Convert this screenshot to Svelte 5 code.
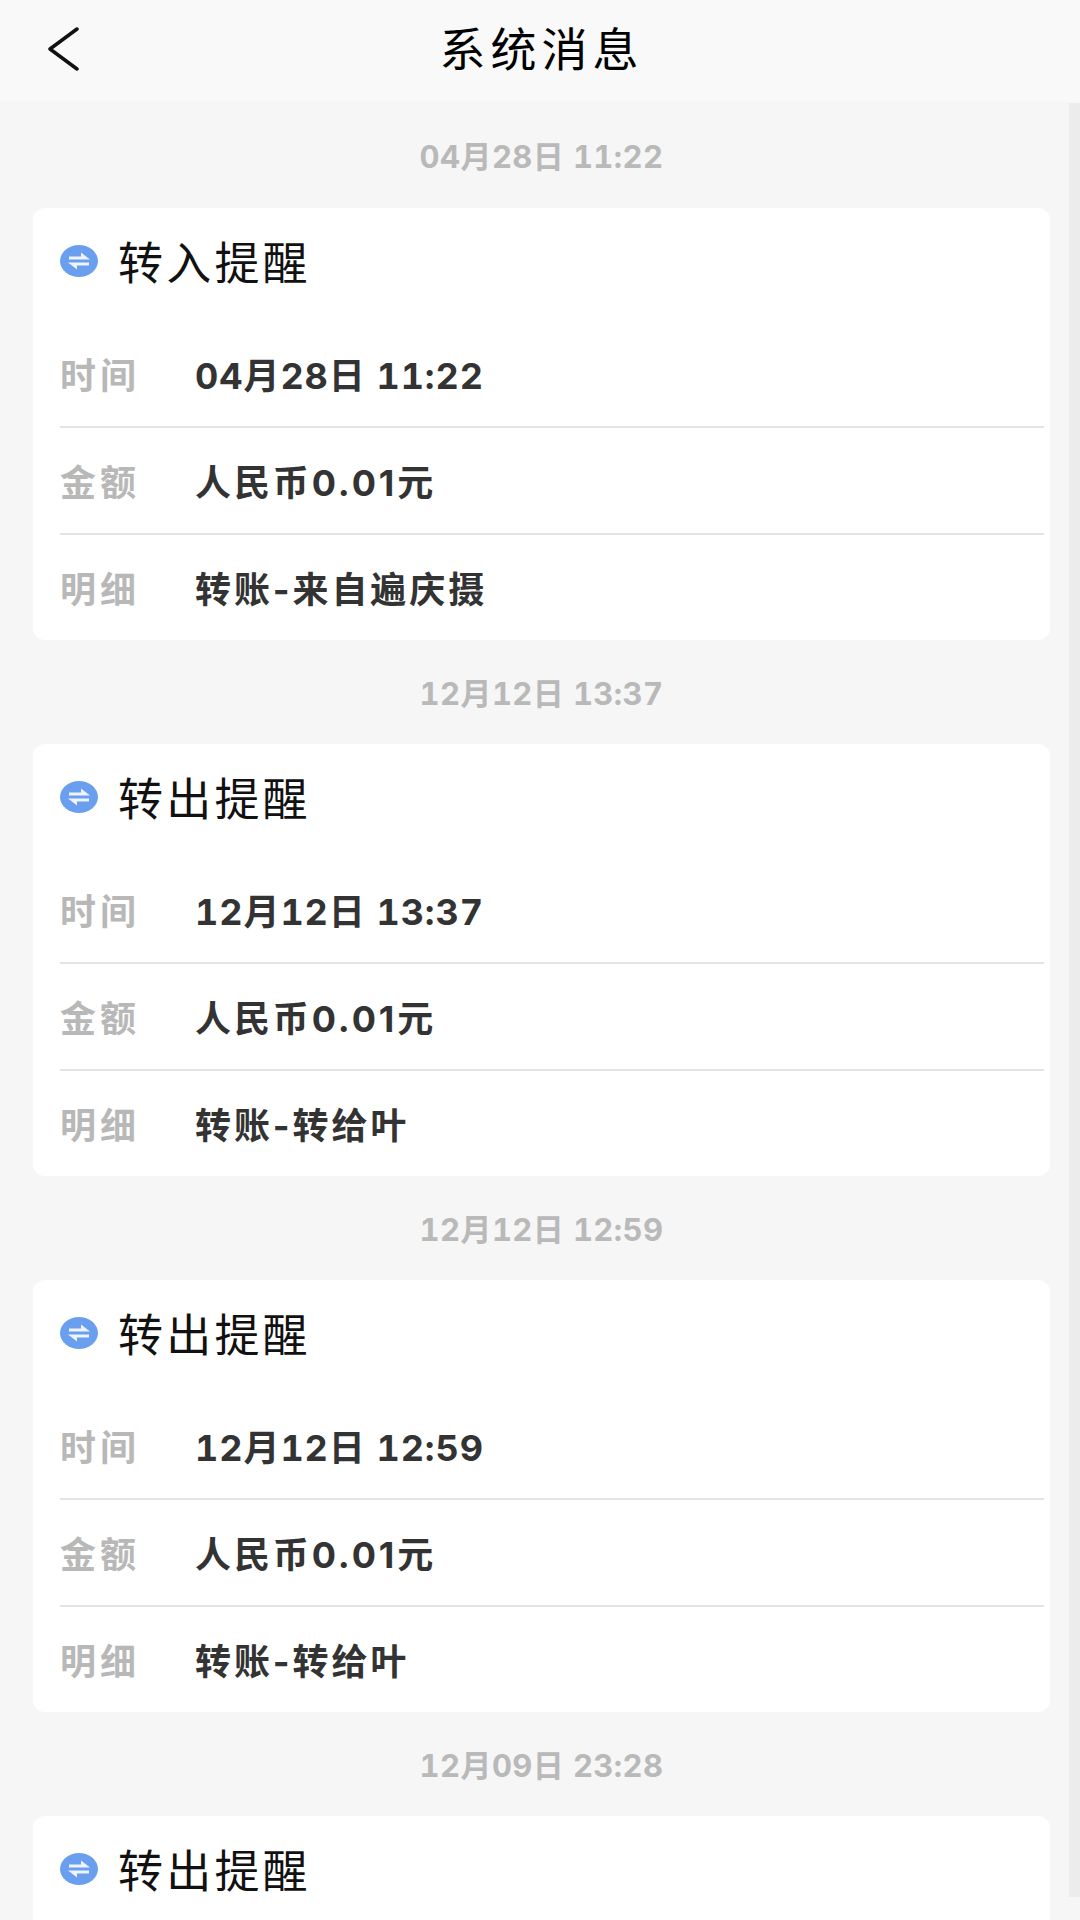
<script lang="ts">
	type Msg = { title: string; date: string; detail: string };

	const messages: Msg[] = [
		{ title: '转入提醒', date: '04月28日 11:22', detail: '转账-来自遍庆摄' },
		{ title: '转出提醒', date: '12月12日 13:37', detail: '转账-转给叶' },
		{ title: '转出提醒', date: '12月12日 12:59', detail: '转账-转给叶' },
		{ title: '转出提醒', date: '12月09日 23:28', detail: '转账-转给叶' },
	];
</script>

<div class="screen">
	<header class="nav">
		<button type="button" class="back" aria-label="返回">
			<svg width="32" height="44" viewBox="0 0 32 44" fill="none">
				<path d="M30 2 L3 22 L30 42" stroke="#111" stroke-width="3.5" stroke-linecap="round" stroke-linejoin="round" />
			</svg>
		</button>
		<h1>系统消息</h1>
	</header>

	<div class="body">
		<main class="list">
			{#each messages as m}
				<div class="stamp">{m.date}</div>
				<section class="card">
					<div class="card-head">
						<svg class="swap" width="38" height="32" viewBox="0 0 38 32">
							<ellipse cx="19" cy="16" rx="19" ry="16" fill="#6a9ff0" />
							<path d="M9 11.5 H21 V7.5 L30 14.5 H9 Z" fill="#eef3fc" />
							<path d="M29 20.5 H17 V24.5 L8 17.5 H29 Z" fill="#eef3fc" />
						</svg>
						<h2>{m.title}</h2>
					</div>
					<div class="row">
						<span class="label">时间</span>
						<span class="value when">{m.date}</span>
					</div>
					<div class="row">
						<span class="label">金额</span>
						<span class="value">人民币0.01元</span>
					</div>
					<div class="row">
						<span class="label">明细</span>
						<span class="value">{m.detail}</span>
					</div>
				</section>
			{/each}
		</main>
		<div class="rail"></div>
	</div>
</div>

<style>
	:global(body) {
		margin: 0;
		background: #f6f6f6;
	}
	.screen {
		width: 1080px;
		height: 1920px;
		overflow: hidden;
		display: flex;
		flex-direction: column;
		font-family: "Noto Sans CJK SC", "Noto Sans", sans-serif;
		background: #f6f6f6;
	}
	.nav {
		flex: none;
		height: 102px;
		background: #f9f9f9;
		display: flex;
		align-items: center;
		justify-content: center;
		position: relative;
	}
	.back {
		position: absolute;
		left: 47px;
		top: 27px;
		padding: 0;
		border: none;
		background: none;
		line-height: 0;
	}
	.nav h1 {
		margin: 0;
		font-size: 46px;
		font-weight: 400;
		letter-spacing: 5px;
		color: #000;
		line-height: 1;
		padding: 0 0 10px 3px;
	}
	.body {
		flex: 1;
		min-height: 0;
		display: flex;
	}
	.list {
		flex: 1;
		min-width: 0;
		padding: 0 19px 0 33px;
	}
	.rail {
		flex: none;
		width: 11px;
		margin: 1px 0 23px;
		background: #ececec;
	}
	.stamp {
		box-sizing: border-box;
		height: 106px;
		padding-bottom: 2px;
		display: flex;
		align-items: center;
		justify-content: center;
		font-family: "Inter", "Noto Sans CJK SC", sans-serif;
		font-variant-numeric: tabular-nums;
		font-size: 31px;
		font-weight: 700;
		letter-spacing: 0.4px;
		color: #b9b9b9;
	}
	.card + .stamp {
		height: 104px;
	}
	.card {
		background: #fff;
		border-radius: 12px;
		padding: 0 6px 0 27px;
	}
	.card-head {
		height: 113px;
		display: flex;
		align-items: center;
		gap: 20px;
	}
	.swap {
		flex: none;
		margin-bottom: 8px;
	}
	.card-head h2 {
		margin: 0;
		font-size: 45px;
		font-weight: 400;
		letter-spacing: 3.2px;
		color: #111;
		line-height: 1;
		padding-bottom: 8px;
	}
	.row {
		box-sizing: border-box;
		height: 107px;
		padding-bottom: 2px;
		display: flex;
		align-items: center;
		border-bottom: 2px solid #e4e4e4;
	}
	.row:last-child {
		height: 105px;
		border-bottom: none;
	}
	.label {
		width: 135px;
		flex: none;
		font-size: 36px;
		font-weight: 700;
		letter-spacing: 4px;
		color: #b8b8b8;
	}
	.value {
		font-family: "Inter", "Noto Sans CJK SC", sans-serif;
		font-size: 36px;
		font-weight: 700;
		letter-spacing: 2.9px;
		color: #333;
	}
	.when {
		font-variant-numeric: tabular-nums;
		letter-spacing: 0.95px;
	}
</style>
